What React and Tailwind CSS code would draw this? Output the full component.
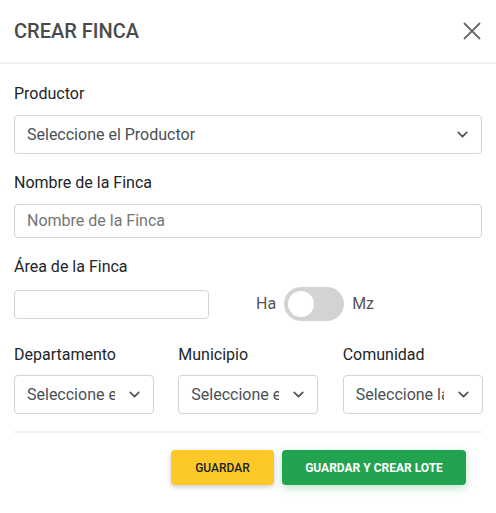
import React from "react";

const Chevron = () => (
  <svg width="11" height="7" viewBox="0 0 11 7" fill="none" stroke="#495057" strokeWidth="1.6" strokeLinecap="round" strokeLinejoin="round">
    <path d="M1.2 1.4 L5.5 5.6 L9.8 1.4" />
  </svg>
);

const Select = ({ text, className = "", gap = "pl-[14px]" }) => (
  <div className={`flex items-center justify-between border border-[#ced4da] rounded-[4px] bg-white pl-[12px] pr-[13px] ${className}`}>
    <span className="text-[16px] text-[#495057] whitespace-nowrap overflow-hidden min-w-0">{text}</span>
    <span className={`shrink-0 ${gap}`}><Chevron /></span>
  </div>
);

export default function App() {
  return (
    <div className="w-[496px] h-[513px] bg-white font-['Roboto',sans-serif] text-[#212529]">
      <div className="flex items-center justify-between h-[64px] px-[14px] border-b-[2px] border-[#f1f1f1]">
        <h1 className="text-[20px] font-medium text-[#4a4a4a]">CREAR FINCA</h1>
        <svg width="18" height="18" viewBox="0 0 18 18" stroke="#6b6b6b" strokeWidth="1.8" className="mr-[1px]">
          <path d="M1 1 L17 17 M17 1 L1 17" />
        </svg>
      </div>
      <div className="px-[14px] pt-[19px]">
        <div className="text-[16px] leading-[22px]">Productor</div>
        <Select text="Seleccione el Productor" className="mt-[10px] h-[39px] w-[468px]" gap="pl-[8px]" />
        <div className="text-[16px] leading-[22px] mt-[18px]">Nombre de la Finca</div>
        <div className="mt-[10px] h-[34px] w-[468px] border border-[#ced4da] rounded-[4px] flex items-center pl-[12px]">
          <span className="text-[16px] text-[#757575]">Nombre de la Finca</span>
        </div>
        <div className="text-[16px] leading-[22px] mt-[18px]">Área de la Finca</div>
        <div className="flex items-center mt-[9px] h-[34px]">
          <div className="w-[195px] h-[29px] border border-[#ced4da] rounded-[4px]" />
          <span className="ml-[47px] text-[16px] text-[#555]">Ha</span>
          <div className="ml-[8px] w-[60px] h-[34px] rounded-full bg-[#d3d3d3] relative">
            <div className="absolute left-[4px] top-[4px] w-[26px] h-[26px] rounded-full bg-white" />
          </div>
          <span className="ml-[8px] text-[16px] text-[#555]">Mz</span>
        </div>
        <div className="grid grid-cols-3 gap-x-[25px] mt-[23px] w-[468px]">
          {[
            ["Departamento", "Seleccione el Departamento"],
            ["Municipio", "Seleccione el Municipio"],
            ["Comunidad", "Seleccione la Comunidad"],
          ].map(([l, t]) => (
            <div key={l}>
              <div className="text-[16px] leading-[22px]">{l}</div>
              <Select text={t} className="mt-[9px] h-[39px] w-[140px]" />
            </div>
          ))}
        </div>
        <div className="mt-[17px] h-[2px] bg-[#f1f1f1] w-[468px]" />
        <div className="flex justify-end gap-[8px] mt-[17px] pr-[16px]">
          <button className="w-[103px] h-[35px] rounded-[4px] bg-[#fcc928] text-[12px] font-medium text-[#222] shadow-[0_2px_5px_rgba(0,0,0,0.2)]">GUARDAR</button>
          <button className="w-[184px] h-[35px] rounded-[4px] bg-[#22a350] text-[12px] font-bold text-white shadow-[0_3px_8px_rgba(34,163,80,0.3)]">GUARDAR Y CREAR LOTE</button>
        </div>
      </div>
    </div>
  );
}
